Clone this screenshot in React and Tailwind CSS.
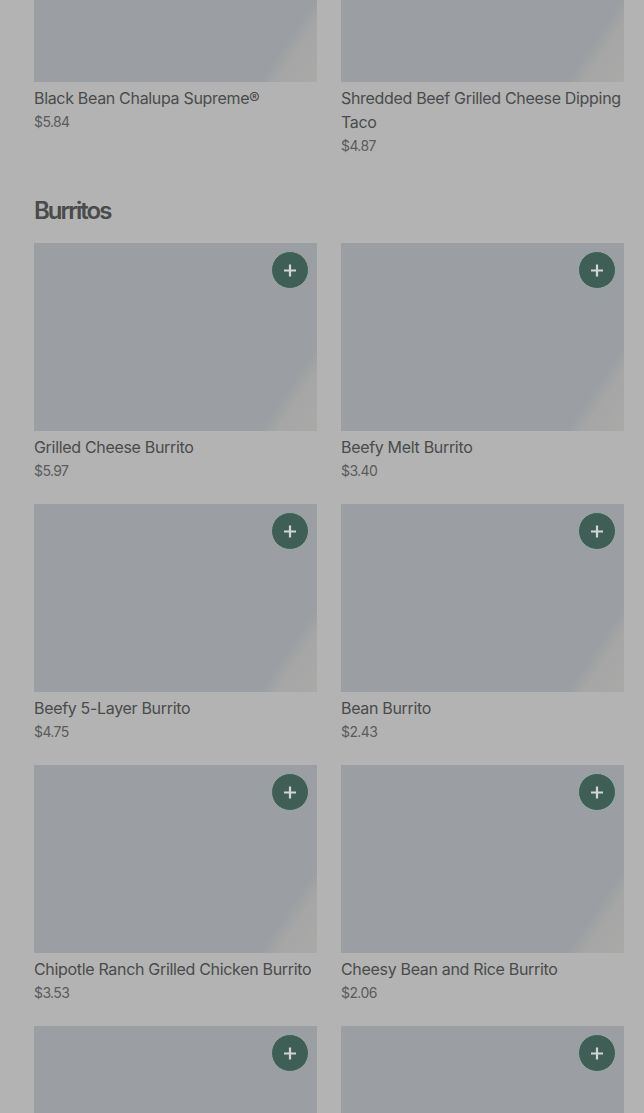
function Plus() {
  return (
    <svg width="13" height="13" viewBox="0 0 13 13" fill="none" stroke="#d0d6d3" strokeWidth="2.2">
      <path d="M6 0.5v12M0 6.5h12" />
    </svg>
  );
}

function Item({ name, price, button = true }) {
  return (
    <div className="flex flex-col">
      <div className="relative h-[188px] bg-[linear-gradient(124deg,#9b9fa3_0%,#9b9fa3_86%,#a5a6a5_90%,#a9a9a8_100%)]">
        {button && (
          <div className="absolute right-[8px] top-[8px] flex h-[38px] w-[38px] items-center justify-center rounded-full border border-[#97a8a1] bg-[#3f5f56]">
            <Plus />
          </div>
        )}
      </div>
      <div className="mt-[4px] text-[16px] leading-[24px] tracking-[-0.32px] text-[#4a4b4b]">{name}</div>
      <div className="text-[14px] leading-[24px] tracking-[-0.6px] text-[#5a5b5b]">{price}</div>
    </div>
  );
}

const burritos = [
  ["Grilled Cheese Burrito", "$5.97"],
  ["Beefy Melt Burrito", "$3.40"],
  ["Beefy 5-Layer Burrito", "$4.75"],
  ["Bean Burrito", "$2.43"],
  ["Chipotle Ranch Grilled Chicken Burrito", "$3.53"],
  ["Cheesy Bean and Rice Burrito", "$2.06"],
  ["", ""],
  ["", ""],
];

export default function App() {
  return (
    <div className="h-[1113px] overflow-hidden bg-[#b3b3b3] font-['Inter',sans-serif]">
      <div className="-mt-[106px] pl-[34px] pr-[20px]">
        <div className="grid grid-cols-2 gap-x-[24px]">
          <Item name="Black Bean Chalupa Supreme®" price="$5.84" button={false} />
          <Item name="Shredded Beef Grilled Cheese Dipping Taco" price="$4.87" button={false} />
        </div>
        <h2 className="mt-[37px] mb-[16px] text-[24px] font-semibold leading-[32px] tracking-[-2px] text-[#4a4b4b]">Burritos</h2>
        <div className="grid grid-cols-2 gap-x-[24px] gap-y-[21px]">
          {burritos.map(([n, p], i) => (
            <Item key={i} name={n} price={p} />
          ))}
        </div>
      </div>
    </div>
  );
}
